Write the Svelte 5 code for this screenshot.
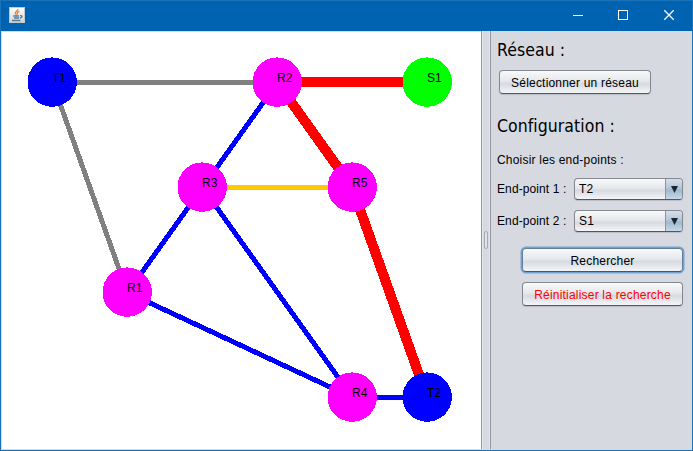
<script>
  const colors = { grey: '#808080', blue: '#0000ff', yellow: '#ffc800', red: '#ff0000' };
  const nodes = {
    T1: { x: 52, y: 82, fill: '#0000ff' },
    R2: { x: 277, y: 82, fill: '#ff00ff' },
    S1: { x: 427, y: 82, fill: '#00ff00' },
    R3: { x: 202, y: 187, fill: '#ff00ff' },
    R5: { x: 352, y: 187, fill: '#ff00ff' },
    R1: { x: 127, y: 292, fill: '#ff00ff' },
    R4: { x: 352, y: 397, fill: '#ff00ff' },
    T2: { x: 427, y: 397, fill: '#0000ff' }
  };
  const links = [
    ['T1', 'R2', 'grey', 5],
    ['T1', 'R1', 'grey', 5],
    ['R1', 'R3', 'blue', 5],
    ['R2', 'R3', 'blue', 5],
    ['R1', 'R4', 'blue', 5],
    ['R3', 'R4', 'blue', 5],
    ['R4', 'T2', 'blue', 5],
    ['R3', 'R5', 'yellow', 5],
    ['R2', 'S1', 'red', 10],
    ['R2', 'R5', 'red', 10],
    ['R5', 'T2', 'red', 10]
  ];
  const endpoints = [
    { label: 'End-point 1 :', value: 'T2' },
    { label: 'End-point 2 :', value: 'S1' }
  ];
</script>

<div class="window">
  <header>
    <svg class="java" width="16" height="16" viewBox="0 0 16 16">
      <defs>
        <linearGradient id="tile" x1="0" y1="0" x2="0" y2="1">
          <stop offset="0" stop-color="#ffffff" />
          <stop offset="1" stop-color="#d4d4d4" />
        </linearGradient>
      </defs>
      <rect x=".5" y=".5" width="15" height="15" fill="url(#tile)" stroke="#c2cad0" />
      <path d="M9 1.8C9.3 4 5.6 4.6 6.4 6.4L7.5 8M10.4 4.3C7.8 5.2 8 6.2 8.8 7.4" fill="none" stroke="#e8802c" stroke-width="1.3" />
      <path d="M4.2 9H10M5 11H10M3 13.5H11.5M11 8.7C14 8.2 13.4 10.8 10.8 11" fill="none" stroke="#517d9d" stroke-width="1.3" />
    </svg>
    <svg class="controls" width="133" height="30" viewBox="0 0 133 30">
      <path d="M13 15.5H23M58.5 10.5H67.5V19.5H58.5Z" fill="none" stroke="#fff" shape-rendering="crispEdges" />
      <path d="M104.3 10.3L113.7 19.7M113.7 10.3L104.3 19.7" fill="none" stroke="#fff" stroke-width="1.25" />
    </svg>
  </header>
  <main>
    <section class="canvas">
      <svg width="480" height="418" viewBox="1 31 480 418">
        <g shape-rendering="crispEdges">
          {#each links as [a, b, color, width]}
            {@const shift = width === 5 ? 0.5 : 0}
            <line
              x1={nodes[a].x + shift} y1={nodes[a].y + shift}
              x2={nodes[b].x + shift} y2={nodes[b].y + shift}
              stroke={colors[color]} stroke-width={width}
            />
          {/each}
          {#each Object.values(nodes) as node}
            <circle cx={node.x + 0.2} cy={node.y + 0.1} r="24.7" fill={node.fill} />
          {/each}
        </g>
        {#each Object.entries(nodes) as [name, node]}
          <text x={node.x} y={node.y}>{name}</text>
        {/each}
      </svg>
    </section>
    <div class="divider"><i></i></div>
    <aside>
      <h2>Réseau :</h2>
      <button class="select">Sélectionner un réseau</button>
      <h2 class="config">Configuration :</h2>
      <p>Choisir les end-points :</p>
      {#each endpoints as endpoint}
        <div class="row">
          <span class="label">{endpoint.label}</span>
          <div class="combo">
            <span>{endpoint.value}</span>
            <b><svg width="7" height="7" viewBox="0 0 7 7"><path d="M0 0H7L3.5 7Z" fill="#1c2630" /></svg></b>
          </div>
        </div>
      {/each}
      <button class="wide focused">Rechercher</button>
      <button class="wide reset">Réinitialiser la recherche</button>
    </aside>
  </main>
</div>

<style>
  .window {
    box-sizing: border-box;
    width: 693px;
    height: 451px;
    display: flex;
    flex-direction: column;
    border: 1px solid #1a73b8;
    background: #d6d9df;
    font: 12px "Liberation Sans", Arial, sans-serif;
    letter-spacing: 0.2px;
    color: #000;
    overflow: hidden;
  }
  header {
    height: 30px;
    flex: none;
    display: flex;
    justify-content: space-between;
    background: #0063b1;
  }
  .java { margin: 6px 0 0 8px; }
  .controls { margin: -1px -1px 0 0; }
  main { flex: 1; display: flex; min-height: 0; }
  .canvas {
    box-sizing: border-box;
    width: 480px;
    height: 419px;
    background: #fff;
    border-left: 1px solid #d6d9df;
    border-top: 1px solid #d6d9df;
    border-bottom: 1px solid #d6d9df;
  }
  .canvas svg { display: block; margin: -1px 0 0 -1px; }
  .canvas text { letter-spacing: 0; }
  .divider {
    box-sizing: border-box;
    width: 10px;
    height: 418px;
    display: flex;
    align-items: center;
    justify-content: center;
    background: #d6d9df;
    border-left: 1px solid #9297a1;
    border-right: 1px solid #9297a1;
    box-shadow: inset 1px 0 #e3e6eb, inset -1px 0 #e3e6eb;
  }
  .divider i {
    box-sizing: border-box;
    width: 4px;
    height: 18px;
    border: 1px solid #a4a9b2;
    border-radius: 2px;
    background: #dfe2e7;
  }
  aside {
    flex: 1;
    display: flex;
    flex-direction: column;
    align-items: flex-start;
    padding: 8px 9px 0 6px;
  }
  h2 {
    margin: 0;
    height: 22px;
    font: 17.5px/22px "DejaVu Sans Condensed", Tahoma, sans-serif;
    letter-spacing: 0.05px;
    white-space: nowrap;
  }
  .config { margin-top: 21px; }
  p { margin: 15px 0 10px; line-height: 16px; height: 16px; white-space: nowrap; }
  button {
    box-sizing: border-box;
    height: 24px;
    padding: 2px 0 0;
    border: 1px solid #85898f;
    border-bottom-color: #55595f;
    border-radius: 4px;
    background: linear-gradient(#f8f9fa, #e6e8ec 45%, #d7dae0 58%, #f4f5f8);
    box-shadow: 0 1px 1px #b9bdc5;
    font: inherit;
    letter-spacing: inherit;
    color: inherit;
    white-space: nowrap;
  }
  .select { width: 152px; margin: 9px 0 0 2px; }
  .row { display: flex; align-items: center; height: 22px; margin-bottom: 10px; }
  .label { width: 77px; white-space: nowrap; letter-spacing: 0.1px; }
  .combo {
    box-sizing: border-box;
    width: 109px;
    height: 22px;
    display: flex;
    align-items: stretch;
    border: 1px solid #85898f;
    border-bottom-color: #4b5763;
    border-radius: 4px;
    background: linear-gradient(#f8f9fa, #e6e8ec 45%, #d7dae0 58%, #f4f5f8);
    box-shadow: 0 1px 1px #b9bdc5;
    overflow: hidden;
  }
  .combo span { flex: 1; padding-left: 4px; line-height: 21px; }
  .combo b {
    width: 16px;
    display: flex;
    align-items: center;
    justify-content: center;
    border-left: 1px solid #7f98ae;
    background: linear-gradient(#d3dfe9, #b5c8d8 45%, #a0b8cd 55%, #c4d8e8);
  }
  .wide { width: 161px; margin-left: 25px; }
  .focused {
    margin-top: 6px;
    border-color: #5f7f9f;
    border-bottom-color: #3e5873;
    box-shadow: 0 0 0 1.5px #73a4d1;
  }
  .reset { margin-top: 10px; color: #f00; }
</style>
